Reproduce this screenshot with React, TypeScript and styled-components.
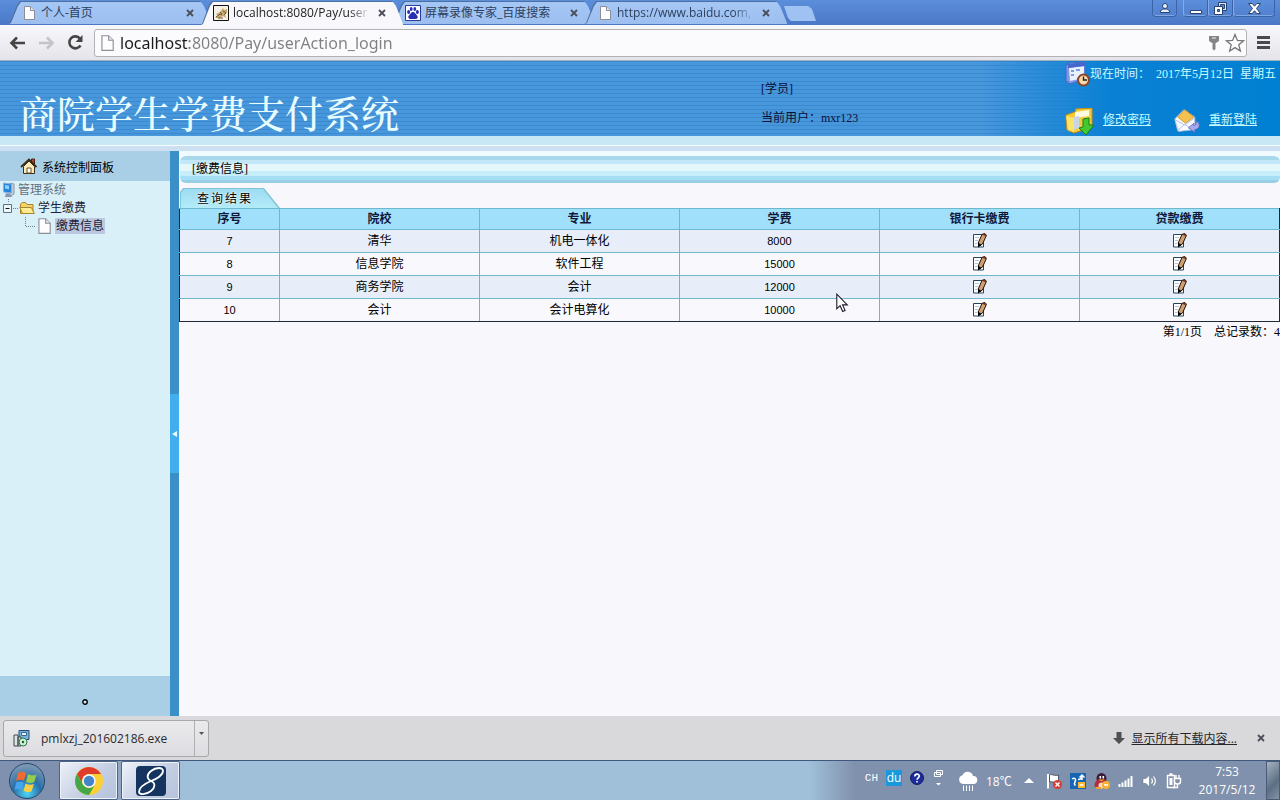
import React from "react";
import styled, { createGlobalStyle } from "styled-components";

const uiFont = '"Open Sans", "Noto Sans CJK SC", sans-serif';
const pageFont = '"Liberation Sans", "Noto Sans CJK SC", sans-serif';
const monoFont = '"Liberation Mono", "Noto Sans CJK SC", monospace';
const songFont = '"Liberation Serif", "Noto Sans CJK SC", serif';

const GlobalStyle = createGlobalStyle`
  * { box-sizing: border-box; }
  body { margin: 0; font-family: ${pageFont}; font-size: 12px; color: #000; }
  button { font: inherit; color: inherit; border: 0; padding: 0; background: none; }
  svg { display: block; flex: none; }
`;

const Desktop = styled.div`
  display: flex;
  flex-direction: column;
  min-height: 100vh;
  background: #f8f7fb;
`;

/* ---------- browser frame ---------- */

const TabStrip = styled.div`
  display: flex;
  justify-content: space-between;
  height: 25px;
  padding-left: 8px;
  background: linear-gradient(#5b8edb, #4b78c6);
  font-family: ${uiFont};
`;

const Tabs = styled.div`
  display: flex;
`;

const TabItem = styled.div<{ $active?: boolean }>`
  position: relative;
  z-index: ${(p) => (p.$active ? 2 : 1)};
  display: flex;
  align-items: center;
  width: 204px;
  height: ${(p) => (p.$active ? 25 : 24)}px;
  margin-right: -12px;
  padding: 1px 14px 0 13px;
  color: ${(p) => (p.$active ? "#222" : "#2d3f5c")};

  &::before,
  &::after {
    content: "";
    position: absolute;
    z-index: -1;
    inset: 1px 0 0 0;
    background: #50719f;
    clip-path: polygon(0 100%, 2px 96%, 9px 4px, 12px 0, 192px 0, 195px 4px, 202px 96%, 100% 100%);
  }
  &::after {
    inset: 2px 1px 0 1px;
    background: ${(p) => (p.$active ? "#f8f7fb" : "linear-gradient(#a4c7f6, #9dbff0)")};
  }
`;

const TabTitle = styled.span<{ $fade?: boolean }>`
  flex: 1;
  margin-left: 4px;
  overflow: hidden;
  white-space: nowrap;
  line-height: 18px;
  mask-image: ${(p) => (p.$fade ? "linear-gradient(90deg, #000 85%, transparent)" : "none")};
`;

const CloseButton = styled.button`
  display: flex;
  align-items: center;
  justify-content: center;
  width: 14px;
  height: 16px;
  margin: 0 1px 0 5px;
`;

const NewTab = styled.button`
  width: 32px;
  height: 15px;
  margin: 6px 0 0 8px;
  background: #a0c2f2;
  clip-path: polygon(0 0, 24px 0, 28px 3px, 100% 100%, 7px 100%, 4px 12px);
`;

const WindowControls = styled.div`
  display: flex;
  padding-right: 5px;
`;

const WindowButton = styled.button<{ $w: number; $gap?: boolean }>`
  display: flex;
  align-items: center;
  justify-content: center;
  width: ${(p) => p.$w}px;
  height: 17px;
  margin-right: ${(p) => (p.$gap ? 6 : 0)}px;
  border: 1px solid #3c62a8;
  border-top: 0;
  border-left-color: ${(p) => (p.$gap ? "#3c62a8" : "#86aae4")};
  border-radius: 0 0 4px 4px;
  box-shadow: inset 0 -1px 0 #82a8e4;
`;

const Toolbar = styled.div`
  display: flex;
  align-items: center;
  gap: 12px;
  height: 36px;
  padding: 0 8px 0 9px;
  background: linear-gradient(#f8f7fb, #e4e4ea);
  border-bottom: 1px solid #9fb2c0;
`;

const ToolButton = styled.button`
  display: flex;
  align-items: center;
  justify-content: center;
  width: 17px;
  height: 20px;
`;

const Omnibox = styled.label`
  flex: 1;
  display: flex;
  align-items: center;
  gap: 4px;
  height: 28px;
  margin: 0 -4px 0 -2px;
  padding: 0 3px;
  background: #fbfafd;
  border: 1px solid #b4b2b4;
  border-radius: 3px;
`;

const AddressInput = styled.input`
  flex: 1;
  min-width: 0;
  height: 26px;
  padding: 0;
  border: 0;
  outline: 0;
  font: 16px/26px "Noto Sans", ${uiFont};
  color: #808080;
  background: linear-gradient(90deg, #1a1a1a 69px, #808080 69px);
  background-clip: text;
  -webkit-text-fill-color: transparent;
`;

/* ---------- page header ---------- */

const Banner = styled.header`
  display: grid;
  grid-template-columns: 1fr 304px 215px;
  height: 75px;
  background:
    linear-gradient(90deg, transparent calc(100% - 300px), #0a80d4 calc(100% - 170px), #0080d2 100%),
    repeating-linear-gradient(#3e88ce 0 1px, #4797dd 1px 4px);
`;

const SystemTitle = styled.h1`
  margin: 0;
  padding: 27px 0 0 19px;
  font-family: "Noto Serif CJK SC", "Noto Sans CJK SC", serif;
  font-weight: 500;
  font-size: 38px;
  line-height: 48px;
  white-space: nowrap;
  color: #e8fdff;
`;

const UserInfo = styled.div`
  padding-top: 19px;
  font-family: ${songFont};
  line-height: 18px;
  color: #0a1038;
`;

const UserLine = styled.p`
  margin: 0 0 11px;
`;

const HeaderTools = styled.div`
  display: flex;
  flex-direction: column;
  justify-content: space-between;
  padding-bottom: 2px;
  font-family: ${songFont};
  line-height: 16px;
  color: #c8fbff;
  white-space: nowrap;
`;

const TimeRow = styled.div`
  display: flex;
  align-items: center;
  height: 26px;
`;

const DateText = styled.span`
  display: flex;
  gap: 6px;
  margin-left: 6px;
`;

const LinkRow = styled.nav`
  display: flex;
  align-items: center;
  height: 29px;
`;

const HeaderLink = styled.a`
  width: 49px;
  margin: 0 22px 3px 8px;
  color: inherit;
  text-decoration: underline;
`;

const BannerEdge = styled.div`
  height: 15px;
  background: linear-gradient(#c9e8f6 0 9px, #f4fdff 9px 10px, #cce0f2 10px);
`;

/* ---------- body ---------- */

const Workspace = styled.div`
  flex: 1;
  display: flex;
`;

const Sidebar = styled.aside`
  display: flex;
  flex-direction: column;
  width: 170px;
  background: #d9f0f8;
`;

const PanelHeading = styled.h2`
  display: flex;
  align-items: center;
  gap: 5px;
  height: 30px;
  margin: 0;
  padding-left: 20px;
  background: #a9cfe6;
  font-size: 12px;
  font-weight: 400;
`;

const Tree = styled.ul`
  flex: 1;
  margin: 0;
  padding: 0;
  list-style: none;
`;

const TreeItem = styled.li<{ $indent: number }>`
  display: flex;
  align-items: center;
  height: 18px;
  padding-left: ${(p) => p.$indent}px;
  color: #1c2438;
`;

const TreeLabel = styled.a<{ $tone?: "muted" | "current" }>`
  margin-left: 2px;
  padding: 0 1px;
  line-height: 16px;
  text-decoration: none;
  color: ${(p) => (p.$tone === "muted" ? "#63727c" : "#1c2438")};
  background: ${(p) => (p.$tone === "current" ? "#bcc8e0" : "transparent")};
`;

const SidebarFooter = styled.div`
  display: flex;
  align-items: center;
  justify-content: center;
  height: 40px;
  padding-top: 12px;
  background: #a9cfe6;
`;

const Divider = styled.div`
  display: flex;
  align-items: center;
  width: 9px;
  background: #3a90c6;
`;

const CollapseButton = styled.button`
  display: flex;
  align-items: center;
  justify-content: center;
  width: 9px;
  height: 79px;
  background: #43aeee;
`;

const Content = styled.main`
  position: relative;
  flex: 1;
  min-width: 0;
  padding-top: 5px;
  background: linear-gradient(#effbff 0 5px, #f8f7fb 5px);
`;

const SectionTitle = styled.h2`
  height: 27px;
  margin: 0 0 5px 1px;
  padding-left: 12px;
  border-radius: 6px;
  background: linear-gradient(
    #a8d8ec 0 4px, #c4e7f7 4px 8px, #e4f8fc 8px 15px, #c6eefb 15px 20px, #a4dff6 20px 24px, #98cfe4 24px
  );
  font: 400 12px/27px ${songFont};
`;

const ResultTab = styled.div`
  width: 101px;
  height: 20px;
  padding: 1px 0 0 1px;
  background: #84c4d8;
  clip-path: polygon(1px 4px, 4px 0, 85px 0, 100% 100%, 1px 100%);
`;

const ResultTabFace = styled.div`
  height: 19px;
  padding-left: 17px;
  background: linear-gradient(#9ddcf2, #b4ebf8);
  clip-path: polygon(1px 4px, 4px 0, 83px 0, 98px 100%, 1px 100%);
  line-height: 20px;
  letter-spacing: 2px;
  text-shadow: 0 0 2px #fff, 0 0 2px #fff;
`;

const FeeTable = styled.table`
  width: 100%;
  table-layout: fixed;
  border-collapse: collapse;
  text-align: center;

  tr > :first-child { border-left-color: #20283a; }
  tr > :last-child { border-right-color: #20283a; }
  tbody tr:last-child > * { border-bottom-color: #20283a; }
`;

const HeadCell = styled.th<{ $narrow?: boolean }>`
  width: ${(p) => (p.$narrow ? "100px" : "auto")};
  height: 21px;
  padding: 0;
  border: 1px solid #6cb8cc;
  background: #a0e0fa;
  line-height: 20px;
  color: #10183a;
`;

const Row = styled.tr`
  height: 23px;
  background: #f9f8fc;
  &:nth-child(odd) { background: #e7eefa; }
`;

const Cell = styled.td<{ $digits?: boolean }>`
  padding: 0;
  border: 1px solid #6cb8cc;
  font-size: ${(p) => (p.$digits ? 11 : 12)}px;
  line-height: 20px;
`;

const EditButton = styled.button`
  display: block;
  width: 14px;
  height: 15px;
  margin: 0 auto 2px;
`;

const Pager = styled.p`
  display: flex;
  justify-content: flex-end;
  gap: 12px;
  margin: 0;
  font-family: ${songFont};
  line-height: 20px;
`;

const Pointer = styled.div`
  position: absolute;
  left: 657px;
  top: 142px;
`;

/* ---------- download shelf ---------- */

const Shelf = styled.div`
  display: flex;
  align-items: center;
  justify-content: space-between;
  height: 44px;
  padding: 0 11px 0 3px;
  background: #d9d9db;
  font-family: ${uiFont};
`;

const Download = styled.div`
  display: flex;
  width: 206px;
  height: 37px;
  background: linear-gradient(#eae9ec, #dddce0);
  border: 1px solid #a8a8aa;
  border-radius: 3px;
`;

const DownloadFile = styled.button`
  flex: 1;
  display: flex;
  align-items: center;
  gap: 11px;
  padding-left: 9px;
  color: #2a2a2e;
`;

const DownloadMenu = styled.button`
  display: flex;
  justify-content: center;
  width: 14px;
  padding-top: 11px;
  border-left: 1px solid #b0b0b2;
`;

const ShelfActions = styled.div`
  display: flex;
  align-items: center;
`;

const ShowAll = styled.a`
  margin: 0 12px 0 7px;
  color: #26262a;
`;

/* ---------- taskbar ---------- */

const Taskbar = styled.footer`
  display: flex;
  justify-content: space-between;
  height: 40px;
  border-top: 1px solid #40587c;
  background: linear-gradient(90deg, #8091b0 60px, #a0bfd8 182px, #a0bfd8 calc(100% - 470px), #8091ad calc(100% - 425px));
  font-family: ${uiFont};
  color: #fff;
`;

const TaskGroup = styled.div`
  display: flex;
  gap: 3px;
`;

const StartButton = styled.button`
  display: flex;
  align-items: center;
  justify-content: center;
  width: 56px;
  padding-right: 2px;
`;

const TaskButton = styled.button`
  display: flex;
  align-items: center;
  justify-content: center;
  width: 59px;
  height: 39px;
  border: 1px solid #4d6488;
  border-radius: 2px;
  background: linear-gradient(135deg, #eef1f8, #c2cde2 60%, #b4c3dc);
  box-shadow: inset 0 0 0 1px #eef3fb;
`;

const Tray = styled.div`
  display: flex;
  align-items: center;
`;

const LanguageBar = styled.div`
  display: flex;
  align-items: center;
  gap: 8px;
  padding-bottom: 5px;
  margin-right: 14px;
  font: 11px/16px ${monoFont};
`;

const Badge = styled.span`
  width: 16px;
  height: 16px;
  background: #1a98dc;
  font: 12px/15px ${uiFont};
  text-align: center;
`;

const Temperature = styled.span`
  margin: 0 12px 0 8px;
  width: 26px;
  white-space: nowrap;
`;

const TrayIcons = styled.div`
  display: flex;
  gap: 8px;
  margin-left: 12px;
`;

const Clock = styled.time`
  width: 60px;
  margin: 0 9px 0 15px;
  line-height: 18px;
  text-align: center;
  white-space: nowrap;
`;

const ShowDesktop = styled.button`
  width: 14px;
  height: 39px;
  border: 1px solid #4a5c74;
  background: linear-gradient(135deg, #a4b2c0, #5c6e84 60%, #8494a6);
`;

/* ---------- icons ---------- */

const PageIcon = ({ size = 16 }: { size?: number }) => (
  <svg width={size} height={size} viewBox="0 0 16 16">
    <path d="M3.500 1.500h6l4 4v9h-10z" fill="#fdfdff" stroke="#8b8f98" />
    <path d="M9.500 1.500v4h4" fill="#e6e6ee" stroke="#8b8f98" />
  </svg>
);

const CatIcon = () => (
  <svg width="16" height="16" viewBox="0 0 16 16">
    <path d="M.5.5h15v15H.5z" fill="#f4efe4" stroke="#111" />
    <path d="M2 13l3-2-2-2 4-2 3-4 1 2 3-1v4l-2 1 1 4-3-2-3 2H3z" fill="#c8a870" />
    <path d="M3 12l4-3 2 1m1-4l3 2-2 2M5 13h5M7 7l2 2" stroke="#6c5838" fill="none" />
  </svg>
);

const PawIcon = () => (
  <svg width="16" height="16" viewBox="0 0 16 16">
    <path d="M.5.5h15v15H.5z" fill="#fff" stroke="#2a3a9a" />
    <g fill="#2630b4">
      <ellipse cx="3.6" cy="7" rx="1.5" ry="2" />
      <ellipse cx="6.2" cy="4" rx="1.4" ry="2" />
      <ellipse cx="9.8" cy="4" rx="1.4" ry="2" />
      <ellipse cx="12.4" cy="7" rx="1.5" ry="2" />
      <path d="M8 7c2 0 2.500 2 4 3.500 1.500 1.500.5 3.500-1.500 3.500H5.500C3.500 14 2.500 12 4 10.500 5.500 9 6 7 8 7z" />
    </g>
  </svg>
);

const CrossIcon = () => (
  <svg width="8" height="8" viewBox="0 0 8 8">
    <path d="M1 1l6 6M7 1L1 7" stroke="#4a4e58" strokeWidth="1.8" />
  </svg>
);

const ArrowIcon = ({ color, flip }: { color: string; flip?: boolean }) => (
  <svg width="17" height="14" viewBox="0 0 17 14">
    <path
      d={flip ? "M1 7h13M9 1.500L14.500 7 9 12.500" : "M16 7H3M8 1.500L2.500 7 8 12.500"}
      fill="none"
      stroke={color}
      strokeWidth="2.6"
    />
  </svg>
);

const ReloadIcon = () => (
  <svg width="17" height="17" viewBox="0 0 17 17">
    <path d="M13.500 11.500A6 6 0 1 1 13 4.500" fill="none" stroke="#454545" strokeWidth="2.6" />
    <path d="M15.500 1v7H8.500z" fill="#454545" />
  </svg>
);

const KeyIcon = () => (
  <svg width="12" height="16" viewBox="0 0 12 16">
    <path d="M1 1h10v5L8 8H4L1 6z" fill="#858585" />
    <path d="M4.500 7h3v7L6 15.500 4.500 14z" fill="#858585" />
    <path d="M4 3h4" stroke="#eee" />
  </svg>
);

const StarIcon = () => (
  <svg width="20" height="20" viewBox="0 0 20 20">
    <path d="M10 1.500l2.400 5.900 6.200.4-4.800 4 1.600 6.200L10 14.600 4.600 18l1.600-6.200-4.800-4 6.200-.4z" fill="#fff" stroke="#777" strokeWidth="1.300" />
  </svg>
);

const MenuIcon = () => (
  <svg width="13" height="13" viewBox="0 0 13 13">
    <path d="M0 1.500h13M0 6.500h13M0 11.500h13" stroke="#4a4a4a" strokeWidth="2.800" />
  </svg>
);

const PersonIcon = () => (
  <svg width="12" height="12" viewBox="0 0 12 12">
    <g fill="#e8f0fc" stroke="#284272">
      <path d="M1.500 10.500V9c1-1.500 2.500-2 4.500-2s3.500.5 4.500 2v1.500z" />
      <circle cx="6" cy="4" r="2.500" />
    </g>
  </svg>
);

const MinimizeIcon = () => (
  <svg width="12" height="14" viewBox="0 0 12 14">
    <path d="M.5 9.500h11v3H.5z" fill="#fff" stroke="#284272" />
  </svg>
);

const RestoreIcon = () => (
  <svg width="13" height="13" viewBox="0 0 13 13">
    <path d="M4.500.5h8v8h-8z" fill="#d8e6fa" stroke="#284272" />
    <path d="M6.500 2.500h4v4h-4z" fill="#5b8edb" stroke="#284272" />
    <path d="M.5 4.500h8v8h-8z" fill="#fff" stroke="#284272" />
    <path d="M3.500 7.500h2v2h-2z" fill="#5b8edb" stroke="#284272" />
  </svg>
);

const CloseWindowIcon = () => (
  <svg width="13" height="11" viewBox="0 0 13 11">
    <path d="M.6.5h3.600l2.300 2.700L8.800.5h3.600L8.500 5.500l3.900 5H8.800L6.500 7.700l-2.300 2.800H.6l3.900-5z" fill="#fff" stroke="#284272" />
  </svg>
);

const CalendarIcon = () => (
  <svg width="25" height="26" viewBox="0 0 25 26">
    <path d="M1 5l3-3 16-1v17L5 23l-4-3z" fill="#7d98e6" stroke="#4a66bc" />
    <path d="M4 7l15-2v12L5 20z" fill="#e9f1ff" />
    <path d="M3 3l17-2v4L3 7z" fill="#4668cc" />
    <path d="M6 10h3m2-1h4M6 14h3" stroke="#7f9ce0" strokeWidth="2" />
    <circle cx="18.500" cy="19" r="5.500" fill="#f8d8a8" stroke="#8c4428" strokeWidth="2" />
    <path d="M18.500 15.500V19h3.500" fill="none" stroke="#222" strokeWidth="1.400" />
  </svg>
);

const FolderDownIcon = () => (
  <svg width="30" height="28" viewBox="0 0 30 28">
    <path d="M1 7l9-3 1-3 16-1v19l-18 6-7-3z" fill="#f4cc38" stroke="#c48e18" />
    <path d="M10 4l14-2v6L10 10z" fill="#fffbe0" />
    <path d="M9 9l5-1v12l-5 2z" fill="#c8d4e8" />
    <path d="M1 8l8 2v14l-6-2z" fill="#fbe46c" />
    <path d="M18 11l6-1v7h5l-8 10-7-7 4-1z" fill="#42c832" stroke="#187c18" />
  </svg>
);

const MailIcon = () => (
  <svg width="27" height="27" viewBox="0 0 30 28">
    <path d="M1 11L11 1l12 8v13L4 24z" fill="#f4f8ff" stroke="#a8b8d8" />
    <path d="M4 9l8-8 10 8-9 7z" fill="#f4c050" stroke="#d49a28" />
    <path d="M1 12l11 6 11-8v13L5 25z" fill="#f8fbff" stroke="#b0c0dc" />
    <path d="M4 24l8-7 6 4" fill="none" stroke="#b0c0dc" />
    <path d="M24 14c5 0 6 8-1 9v3l-7-5 6-5v3c3-1 3-3 2-5z" fill="#a8acec" stroke="#6870c0" />
  </svg>
);

const HouseIcon = () => (
  <svg width="17" height="17" viewBox="0 0 17 17">
    <path d="M11.500 1h3v6h-3z" fill="#b84830" stroke="#421" />
    <path d="M3.500 8.500v7h11v-7L9 3z" fill="#fbe9b8" stroke="#3a2c18" />
    <path d="M1 9l8-7.500L16.500 9" fill="none" stroke="#3a2c18" strokeWidth="1.800" />
    <path d="M7 10h4v5H7z" fill="#fff" stroke="#6c5020" />
  </svg>
);

const ComputerIcon = () => (
  <svg width="14" height="16" viewBox="0 0 14 16">
    <path d="M9 1l4 1v10l-3 2-2-1z" fill="#c4ccd8" stroke="#8c98ac" />
    <path d="M2.500 1l8 1v9l-8-1z" fill="#2484dc" stroke="#88b0dc" />
    <path d="M4 3l4 .5v4l-4-1z" fill="#8cd0fc" />
    <path d="M5 11l4 1 2 3H4z" fill="#8894b0" />
  </svg>
);

const MinusBox = () => (
  <svg width="16" height="18" viewBox="0 0 16 18">
    <path d="M5.500 0v4M10 9.500h6" stroke="#70808c" strokeDasharray="1 1" />
    <path d="M.5 5.500h8v8h-8z" fill="#eaf6fa" stroke="#607080" />
    <path d="M2.500 9.500h4" stroke="#101820" />
  </svg>
);

const FolderIcon = () => (
  <svg width="16" height="14" viewBox="0 0 16 14">
    <path d="M1.500 12.500V3l2-1.500h3L8 3.500h6v9z" fill="#f4d468" stroke="#a8842c" />
    <path d="M3.500 12.500L.8 6.500h11.500l3 6z" fill="#ffec90" stroke="#a8842c" />
  </svg>
);

const BranchLines = () => (
  <svg width="10" height="18" viewBox="0 0 10 18">
    <path d="M.5 0v9.500H10" fill="none" stroke="#70808c" strokeDasharray="1 1" />
  </svg>
);

const EditIcon = () => (
  <svg width="14" height="15" viewBox="0 0 14 15">
    <path d="M.5 1.500h10v12.500H.5z" fill="#fff" stroke="#24465c" />
    <path d="M2 4.500h4M2 7.500h3M2 10.500h2" stroke="#b4c4dc" />
    <path d="M9 1.500l3-.9 1.400 1.900L9.500 11 6 13l-.8-3z" fill="#d0a070" stroke="#20140c" />
    <path d="M9.500 1l3.500 1.500" stroke="#703020" strokeWidth="1.600" />
    <path d="M5 9.500L8.500 12l-3.500 2.500z" fill="#000" />
  </svg>
);

const CursorIcon = () => (
  <svg width="13" height="20" viewBox="0 0 13 20">
    <path d="M.8 1.200v14.500l3.300-3 2.600 5.800 2.400-1-2.500-5.600h4.700z" fill="#fff" stroke="#1c1c2c" strokeWidth="1.100" />
  </svg>
);

const InstallerIcon = () => (
  <svg width="17" height="17" viewBox="0 0 17 17">
    <path d="M6 .5h10v9H6z" fill="#78b4e0" stroke="#244c70" />
    <path d="M8.500 2.500h5v3h-5z" fill="#e4f4ff" stroke="#386890" />
    <path d="M1 5h4v11H1zM5 7h3v9H5z" fill="#dce4e4" stroke="#404848" />
    <circle cx="10" cy="12" r="4" fill="#c8f0d4" stroke="#307848" />
    <circle cx="10" cy="12" r="1.200" fill="#285838" />
  </svg>
);

const StartOrb = () => (
  <svg width="38" height="38" viewBox="0 0 38 38">
    <defs>
      <radialGradient id="orb" cx="50%" cy="85%" r="80%">
        <stop offset="0" stopColor="#52d4f4" />
        <stop offset=".5" stopColor="#2870a8" />
        <stop offset="1" stopColor="#7c98b4" />
      </radialGradient>
    </defs>
    <circle cx="19" cy="19" r="17.500" fill="url(#orb)" stroke="#24486c" />
    <path d="M10 11c3-1.600 5-1.600 8 0l-2 8c-3-1.600-5-1.600-8 0z" fill="#f06a34" />
    <path d="M20 12c3 1.600 5 1.600 8.500.4l-2.200 7.600c-3 1.300-5.300 1.300-8.300-.3z" fill="#94cc4c" />
    <path d="M8 20.500c2.600-1.500 5-1.500 7.600.1l-2 7.400c-2.600-1.500-4.600-1.500-7 0z" fill="#48a4ec" />
    <path d="M17.600 21.500c2.700 1.600 5 1.600 8.200.4l-2.200 7.300c-3 1.300-5 1.200-8-.4z" fill="#fcd044" />
  </svg>
);

const ChromeIcon = () => (
  <svg width="30" height="30" viewBox="0 0 30 30">
    <circle cx="15" cy="15" r="14" fill="#fcd032" />
    <path d="M2.880 8A14 14 0 0 1 27.120 8H15a7 7 0 0 0-6.060 10.500z" fill="#e03c2c" />
    <path d="M2.880 8A14 14 0 0 0 15 29l6.060-10.500a7 7 0 0 1-12.120 0z" fill="#44a848" />
    <circle cx="15" cy="15" r="6.800" fill="#f4f6fa" />
    <circle cx="15" cy="15" r="5.200" fill="#4484c8" />
  </svg>
);

const RecorderIcon = () => (
  <svg width="30" height="30" viewBox="0 0 30 30">
    <rect width="30" height="30" rx="4" fill="#14335e" />
    <path
      d="M27 5C27 1 20 1 15 5 10 9 11 13 15 15c5 2 4 7 0 10C10 29 3 29 3 26c0-4 5-8 12-11 6-2 12-6 12-10z"
      fill="none"
      stroke="#fff"
      strokeWidth="1.8"
    />
  </svg>
);

const HelpIcon = () => (
  <svg width="14" height="14" viewBox="0 0 14 14">
    <circle cx="7" cy="7" r="6.500" fill="#1c2c9c" stroke="#101c64" />
    <path d="M4.800 5.400c0-3 4.500-3 4.500-.3C9.300 6.800 7 6.800 7 8.700M7 10v1.600" fill="none" stroke="#fff" strokeWidth="1.600" />
  </svg>
);

const LangOptionsIcon = () => (
  <svg width="12" height="18" viewBox="0 0 12 18">
    <path d="M4.500 1.500h6v4h-6zM2.500 3.500h6v4h-6z" fill="#8091ad" stroke="#fff" />
    <path d="M4 14h5l-2.500 2.500z" fill="#fff" />
  </svg>
);

const WeatherIcon = () => (
  <svg width="20" height="20" viewBox="0 0 20 20">
    <path d="M5 13a4.500 4.500 0 0 1-.5-8.800A5.500 5.500 0 0 1 15 5a4 4 0 0 1 .5 8z" fill="#fff" />
    <path d="M5.500 14.500V20M8.500 14.500V20M11.500 14.500V20M14.500 14.500V20" stroke="#fff" />
  </svg>
);

const FlagIcon = () => (
  <svg width="16" height="16" viewBox="0 0 16 16">
    <path d="M2 1v14.500" stroke="#fff" strokeWidth="2" />
    <path d="M3.500 2c3-1.500 4 1.500 9 0v7c-4 1.500-6-1-9 0z" fill="#fff" stroke="#303c4c" strokeWidth=".8" />
    <circle cx="11.500" cy="11.500" r="4.500" fill="#d43c34" />
    <path d="M9.500 9.500l4 4m0-4l-4 4" stroke="#fff" strokeWidth="1.400" />
  </svg>
);

const SyncIcon = () => (
  <svg width="16" height="16" viewBox="0 0 16 16">
    <path d="M0 0h16v16H0z" fill="#1466b4" />
    <path d="M2 6c2-1.500 4-.5 3.500 1.500S3 11 5.500 12.500M8 6.500c3 0 4-1.500 4-4M9.500 4.500L12 2l2.500 2.500M12 2v5" fill="none" stroke="#fff" strokeWidth="1.500" />
    <path d="M8 9h7v6H8z" fill="#f8b830" />
    <path d="M9.500 12h4" stroke="#fff" strokeWidth="1.600" />
  </svg>
);

const PenguinIcon = () => (
  <svg width="16" height="16" viewBox="0 0 16 16">
    <ellipse cx="7.500" cy="5.500" rx="5" ry="5.500" fill="#3c1c34" />
    <path d="M.5 14c0-6 2-7.500 7-7.500S14 8 14 13z" fill="#b42c3c" />
    <ellipse cx="7.500" cy="12.500" rx="3" ry="3" fill="#fbd8c0" />
    <path d="M5.500 3h1.600v2.400H5.500zM8.500 3h1.600v2.400H8.500z" fill="#fff" />
    <path d="M4 6.500h7l-3.500 1.800zM2 14h5v2H2z" fill="#f4a428" />
    <circle cx="12" cy="12" r="4" fill="#f8b030" />
    <path d="M10 12h4" stroke="#fff" strokeWidth="1.600" />
  </svg>
);

const SignalIcon = () => (
  <svg width="16" height="16" viewBox="0 0 16 16">
    <path d="M1.500 11v3M4.500 9.500V14M7.500 7.500V14M10.500 5.500V14M13.500 3v11" stroke="#fff" strokeWidth="2" />
  </svg>
);

const SpeakerIcon = () => (
  <svg width="16" height="16" viewBox="0 0 16 16">
    <path d="M1 5.500h3L7.500 2v12L4 10.500H1z" fill="#fff" stroke="#5c6878" strokeWidth=".5" />
    <path d="M9.500 5.500q2 2.500 0 5M11.500 3.500q3.600 4.500 0 9" fill="none" stroke="#fff" strokeWidth="1.200" />
  </svg>
);

const PowerIcon = () => (
  <svg width="16" height="16" viewBox="0 0 16 16">
    <path d="M1.500 2.500h7v12h-7zM3.500 1h3" fill="#8091ad" stroke="#fff" strokeWidth="1.400" />
    <path d="M3.500 5h3v7h-3z" fill="#fff" />
    <path d="M8.500 5.500h6v3c0 2-1 2.500-3 2.500s-3-.5-3-2.500z" fill="#8091ad" stroke="#fff" strokeWidth="1.400" />
    <path d="M10 2v3m3-3v3M11.500 11v3.500H7" fill="none" stroke="#fff" strokeWidth="1.400" />
  </svg>
);

const Triangle = ({ points, w, h, color }: { points: string; w: number; h: number; color: string }) => (
  <svg width={w} height={h} viewBox={`0 0 ${w} ${h}`}>
    <polygon points={points} fill={color} />
  </svg>
);

/* ---------- data ---------- */

const tabs = [
  { title: "个人-首页", icon: <PageIcon /> },
  { title: "localhost:8080/Pay/user", icon: <CatIcon />, active: true, fade: true },
  { title: "屏幕录像专家_百度搜索", icon: <PawIcon /> },
  { title: "https://www.baidu.com,", icon: <PageIcon />, fade: true },
];

const columns = ["序号", "院校", "专业", "学费", "银行卡缴费", "贷款缴费"];

const fees = [
  { id: 7, school: "清华", major: "机电一体化", fee: 8000 },
  { id: 8, school: "信息学院", major: "软件工程", fee: 15000 },
  { id: 9, school: "商务学院", major: "会计", fee: 12000 },
  { id: 10, school: "会计", major: "会计电算化", fee: 10000 },
];

export default function App() {
  return (
    <Desktop>
      <GlobalStyle />

      <TabStrip>
        <Tabs>
          {tabs.map((t) => (
            <TabItem key={t.title} $active={t.active}>
              {t.icon}
              <TabTitle $fade={t.fade}>{t.title}</TabTitle>
              <CloseButton aria-label="关闭标签页"><CrossIcon /></CloseButton>
            </TabItem>
          ))}
          <NewTab aria-label="新标签页" />
        </Tabs>
        <WindowControls>
          <WindowButton $w={25} $gap aria-label="用户"><PersonIcon /></WindowButton>
          <WindowButton $w={25} aria-label="最小化"><MinimizeIcon /></WindowButton>
          <WindowButton $w={25} aria-label="还原"><RestoreIcon /></WindowButton>
          <WindowButton $w={42} aria-label="关闭"><CloseWindowIcon /></WindowButton>
        </WindowControls>
      </TabStrip>

      <Toolbar>
        <ToolButton aria-label="后退"><ArrowIcon color="#454545" /></ToolButton>
        <ToolButton aria-label="前进"><ArrowIcon color="#c4c4c8" flip /></ToolButton>
        <ToolButton aria-label="重新加载"><ReloadIcon /></ToolButton>
        <Omnibox>
          <PageIcon size={18} />
          <AddressInput aria-label="地址" defaultValue="localhost:8080/Pay/userAction_login" />
          <ToolButton aria-label="密码"><KeyIcon /></ToolButton>
          <ToolButton aria-label="收藏"><StarIcon /></ToolButton>
        </Omnibox>
        <ToolButton aria-label="菜单"><MenuIcon /></ToolButton>
      </Toolbar>

      <Banner>
        <SystemTitle>商院学生学费支付系统</SystemTitle>
        <UserInfo>
          <UserLine>[学员]</UserLine>
          <UserLine>当前用户：mxr123</UserLine>
        </UserInfo>
        <HeaderTools>
          <TimeRow>
            <CalendarIcon />
            <span>现在时间：</span>
            <DateText>
              <span>2017年5月12日</span>
              <span>星期五</span>
            </DateText>
          </TimeRow>
          <LinkRow>
            <FolderDownIcon />
            <HeaderLink href="#password">修改密码</HeaderLink>
            <MailIcon />
            <HeaderLink href="#login">重新登陆</HeaderLink>
          </LinkRow>
        </HeaderTools>
      </Banner>
      <BannerEdge />

      <Workspace>
        <Sidebar>
          <PanelHeading><HouseIcon />系统控制面板</PanelHeading>
          <Tree>
            <TreeItem $indent={1}>
              <ComputerIcon />
              <TreeLabel href="#system" $tone="muted">管理系统</TreeLabel>
            </TreeItem>
            <TreeItem $indent={3}>
              <MinusBox />
              <FolderIcon />
              <TreeLabel href="#fees">学生缴费</TreeLabel>
            </TreeItem>
            <TreeItem $indent={25}>
              <BranchLines />
              <PageIcon size={18} />
              <TreeLabel href="#info" $tone="current">缴费信息</TreeLabel>
            </TreeItem>
          </Tree>
          <SidebarFooter>
            <svg width="6" height="6" viewBox="0 0 6 6">
              <circle cx="3" cy="3" r="2.200" fill="#d8e8f4" stroke="#000" strokeWidth="1.400" />
            </svg>
          </SidebarFooter>
        </Sidebar>
        <Divider>
          <CollapseButton aria-label="收起">
            <Triangle points="5,0 5,6 0,3" w={5} h={6} color="#e8fbff" />
          </CollapseButton>
        </Divider>
        <Content>
          <SectionTitle>[缴费信息]</SectionTitle>
          <ResultTab><ResultTabFace>查询结果</ResultTabFace></ResultTab>
          <FeeTable>
            <thead>
              <tr>
                {columns.map((c, i) => (
                  <HeadCell key={c} scope="col" $narrow={i === 0}>{c}</HeadCell>
                ))}
              </tr>
            </thead>
            <tbody>
              {fees.map((f) => (
                <Row key={f.id}>
                  <Cell $digits>{f.id}</Cell>
                  <Cell>{f.school}</Cell>
                  <Cell>{f.major}</Cell>
                  <Cell $digits>{f.fee}</Cell>
                  <Cell><EditButton aria-label="银行卡缴费"><EditIcon /></EditButton></Cell>
                  <Cell><EditButton aria-label="贷款缴费"><EditIcon /></EditButton></Cell>
                </Row>
              ))}
            </tbody>
          </FeeTable>
          <Pager>
            <span>第1/1页</span>
            <span>总记录数：4</span>
          </Pager>
          <Pointer><CursorIcon /></Pointer>
        </Content>
      </Workspace>

      <Shelf>
        <Download>
          <DownloadFile><InstallerIcon />pmlxzj_201602186.exe</DownloadFile>
          <DownloadMenu aria-label="下载选项">
            <Triangle points="0,0 5,0 2.500,3" w={5} h={3} color="#555" />
          </DownloadMenu>
        </Download>
        <ShelfActions>
          <svg width="12" height="12" viewBox="0 0 12 12">
            <path d="M3.500 0h5v6H12l-6 6-6-6h3.500z" fill="#505054" />
          </svg>
          <ShowAll href="#downloads">显示所有下载内容...</ShowAll>
          <CloseButton aria-label="关闭下载栏"><CrossIcon /></CloseButton>
        </ShelfActions>
      </Shelf>

      <Taskbar>
        <TaskGroup>
          <StartButton aria-label="开始"><StartOrb /></StartButton>
          <TaskButton aria-label="Chrome"><ChromeIcon /></TaskButton>
          <TaskButton aria-label="屏幕录像专家"><RecorderIcon /></TaskButton>
        </TaskGroup>
        <Tray>
          <LanguageBar>
            <span>CH</span>
            <Badge>du</Badge>
            <HelpIcon />
            <LangOptionsIcon />
          </LanguageBar>
          <WeatherIcon />
          <Temperature>18℃</Temperature>
          <Triangle points="0,5 10,5 5,0" w={10} h={5} color="#fff" />
          <TrayIcons>
            <FlagIcon />
            <SyncIcon />
            <PenguinIcon />
            <SignalIcon />
            <SpeakerIcon />
            <PowerIcon />
          </TrayIcons>
          <Clock>7:53<br />2017/5/12</Clock>
          <ShowDesktop aria-label="显示桌面" />
        </Tray>
      </Taskbar>
    </Desktop>
  );
}
